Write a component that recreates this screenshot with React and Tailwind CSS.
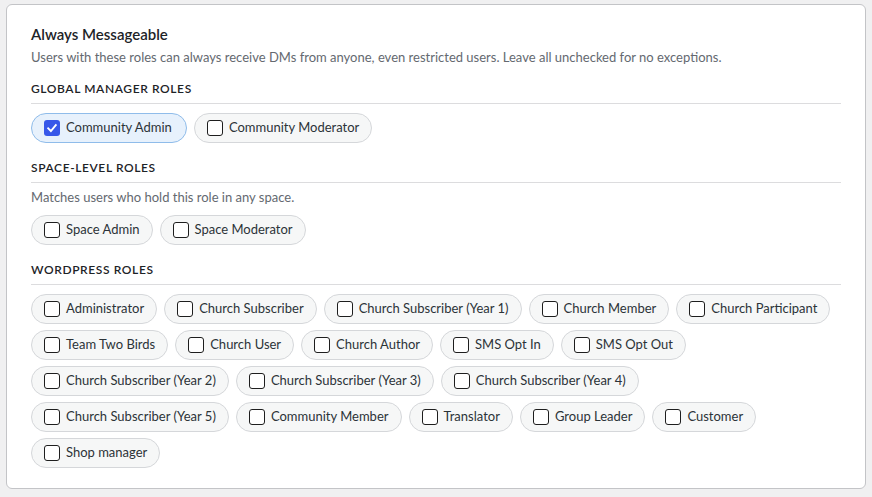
const globalRoles = [
    { label: 'Community Admin', checked: true },
    { label: 'Community Moderator' },
];

const spaceRoles = [{ label: 'Space Admin' }, { label: 'Space Moderator' }];

const wpRoles = [
    'Administrator',
    'Church Subscriber',
    'Church Subscriber (Year 1)',
    'Church Member',
    'Church Participant',
    'Team Two Birds',
    'Church User',
    'Church Author',
    'SMS Opt In',
    'SMS Opt Out',
    'Church Subscriber (Year 2)',
    'Church Subscriber (Year 3)',
    'Church Subscriber (Year 4)',
    'Church Subscriber (Year 5)',
    'Community Member',
    'Translator',
    'Group Leader',
    'Customer',
    'Shop manager',
].map((label) => ({ label }));

function Chip({ label, checked }) {
    return (
        <label
            className={`flex items-center gap-[6px] h-[30px] pl-3 pr-3 rounded-full border text-[13px] text-[#2c3338] ${
                checked ? 'bg-[#e7f1fc] border-[#8fbcea] pr-[14px]' : 'bg-[#f6f7f7] border-[#d5d7da]'
            }`}
        >
            {checked ? (
                <span className="w-4 h-4 rounded-[3px] bg-[#3858e9] flex items-center justify-center">
                    <svg width="12" height="12" viewBox="0 0 12 12" fill="none">
                        <path d="M2.2 6.3 L4.9 9 L9.8 3.2" stroke="white" strokeWidth="1.9" strokeLinecap="square" />
                    </svg>
                </span>
            ) : (
                <span className="w-4 h-4 rounded-[3px] border border-[#1e1e1e] bg-white" />
            )}
            <span>{label}</span>
        </label>
    );
}

function Section({ title, note, roles }) {
    return (
        <div>
            <h3 className="text-[12px] font-semibold uppercase tracking-[0.6px] text-[#1d2327] pb-[4px] border-b border-[#dcdcde] leading-[20px]">
                {title}
            </h3>
            {note && <p className="text-[13px] text-[#646970] mt-[5px] leading-[18px]">{note}</p>}
            <div className="flex flex-wrap gap-x-[7px] gap-y-[6px] mt-[9px]">
                {roles.map((r) => (
                    <Chip key={r.label} {...r} />
                ))}
            </div>
        </div>
    );
}

export default function App() {
    return (
        <div className="min-h-[497px] bg-[#f0f0f1] pt-[4px] px-[6px] font-['Lato',sans-serif]">
            <div className="bg-white border border-[#c3c4c7] rounded-[6px] w-[860px] px-6 pt-[19px] pb-[20px]">
                <h2 className="text-[15px] font-semibold text-[#1d2327] leading-[20px]">Always Messageable</h2>
                <p className="text-[13px] text-[#646970] mt-[4px] leading-[18px]">
                    Users with these roles can always receive DMs from anyone, even restricted users. Leave all unchecked for no exceptions.
                </p>
                <div className="flex flex-col gap-[15px] mt-[13px]">
                    <Section title="Global Manager Roles" roles={globalRoles} />
                    <Section title="Space-Level Roles" note="Matches users who hold this role in any space." roles={spaceRoles} />
                    <Section title="WordPress Roles" roles={wpRoles} />
                </div>
            </div>
        </div>
    );
}
